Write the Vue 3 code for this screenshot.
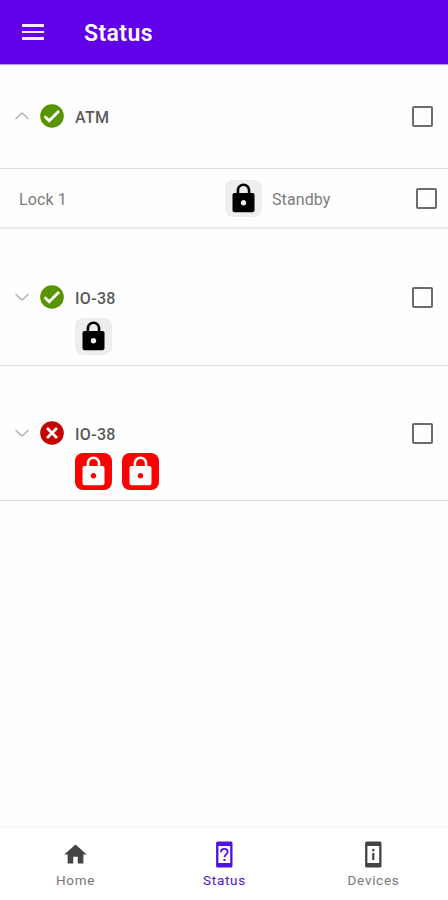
<script setup>
import { ref } from 'vue';

const LOCK_PATH =
  'M18.6 8H17V6c0-2.76-2.24-5-5-5S7 3.24 7 6v2H5.4C4.6 8 4 8.6 4 9.4v11.2c0 .8.6 1.4 1.4 1.4h13.2c.8 0 1.4-.6 1.4-1.4V9.4c0-.8-.6-1.4-1.4-1.4zM12 17c-1.1 0-2-.9-2-2s.9-2 2-2 2 .9 2 2-.9 2-2 2zm3.1-9H8.9V6c0-1.71 1.39-3.1 3.1-3.1 1.71 0 3.1 1.39 3.1 3.1v2z';

const groups = ref([
  {
    id: 1,
    name: 'ATM',
    ok: true,
    open: true,
    checked: false,
    locks: [{ id: 1, name: 'Lock 1', state: 'Standby', alarm: false, checked: false }],
  },
  {
    id: 2,
    name: 'IO-38',
    ok: true,
    open: false,
    checked: false,
    locks: [{ id: 1, name: 'Lock 1', state: 'Standby', alarm: false, checked: false }],
  },
  {
    id: 3,
    name: 'IO-38',
    ok: false,
    open: false,
    checked: false,
    locks: [
      { id: 1, name: 'Lock 1', state: 'Alarm', alarm: true, checked: false },
      { id: 2, name: 'Lock 2', state: 'Alarm', alarm: true, checked: false },
    ],
  },
]);

const activeTab = ref('Status');
const tabs = ['Home', 'Status', 'Devices'];

const toggleGroup = (group) => {
  group.open = !group.open;
};
</script>

<template>
  <div class="screen">
    <header class="app-bar">
      <button class="menu-button" aria-label="Menu">
        <span></span>
        <span></span>
        <span></span>
      </button>
      <h1>Status</h1>
    </header>

    <main class="content">
      <section v-for="group in groups" :key="group.id">
        <div class="group" :class="{ open: group.open }">
          <div class="group-head">
            <button class="chevron" @click="toggleGroup(group)">
              <svg width="16" height="10" viewBox="0 0 16 10">
                <path :d="group.open ? 'M1.5 8 L8 2 L14.5 8' : 'M1.5 2 L8 8 L14.5 2'" />
              </svg>
            </button>
            <svg class="badge" width="24" height="24" viewBox="0 0 24 24">
              <circle cx="12" cy="12" r="11.8" :fill="group.ok ? '#579400' : '#c40000'" />
              <path v-if="group.ok" d="M4.6 12.2l4.6 4.5 9.8-9.8" stroke-width="2.8" />
              <path v-else d="M7 7l10 10M17 7l-10 10" stroke-width="2.8" />
            </svg>
            <span class="group-name">{{ group.name }}</span>
            <button
              class="checkbox"
              :class="{ checked: group.checked }"
              @click="group.checked = !group.checked"
            ></button>
          </div>

          <!-- collapsed group: lock summary -->
          <div v-if="!group.open" class="lock-list">
            <span v-for="lock in group.locks" :key="lock.id" class="tile" :class="{ alarm: lock.alarm }">
              <svg width="33" height="33" viewBox="0 0 24 24"><path :d="LOCK_PATH" /></svg>
            </span>
          </div>
        </div>

        <!-- expanded group: one row per lock -->
        <template v-if="group.open">
          <div v-for="lock in group.locks" :key="lock.id" class="lock-row">
            <span class="lock-name">{{ lock.name }}</span>
            <span class="tile" :class="{ alarm: lock.alarm }">
              <svg width="33" height="33" viewBox="0 0 24 24"><path :d="LOCK_PATH" /></svg>
            </span>
            <span class="lock-state">{{ lock.state }}</span>
            <button
              class="checkbox"
              :class="{ checked: lock.checked }"
              @click="lock.checked = !lock.checked"
            ></button>
          </div>
        </template>
      </section>
    </main>

    <nav class="bottom-nav">
      <button
        v-for="tab in tabs"
        :key="tab"
        class="tab"
        :class="{ active: activeTab === tab }"
        @click="activeTab = tab"
      >
        <svg v-if="tab === 'Home'" width="27" height="27" viewBox="0 0 24 24">
          <path fill="currentColor" d="M10 20v-6h4v6h5v-8h3L12 3 2 12h3v8z" />
        </svg>
        <svg v-else width="27" height="27" viewBox="0 0 27 27">
          <path
            fill="currentColor"
            fill-rule="evenodd"
            d="M6.7 .5h13.2a1.6 1.6 0 0 1 1.6 1.6v22.8a1.6 1.6 0 0 1-1.6 1.6H6.7a1.6 1.6 0 0 1-1.6-1.6V2.1A1.6 1.6 0 0 1 6.7 .5zM7.4 5v17h11.8V5z"
          />
          <g v-if="tab === 'Status'">
            <path
              class="line"
              d="M9.9 11.2c0-2 1.4-3.4 3.4-3.4s3.4 1.3 3.4 3.1c0 2.4-3.2 2.6-3.2 5.3"
            />
            <rect x="12.5" y="18" width="2" height="2" fill="currentColor" />
          </g>
          <g v-else fill="currentColor">
            <rect x="12.2" y="8" width="2.2" height="2.3" />
            <rect x="12.2" y="12" width="2.2" height="7" />
          </g>
        </svg>
        <span>{{ tab }}</span>
      </button>
    </nav>
  </div>
</template>

<style>
body {
  margin: 0;
  background: #fff;
}
</style>

<style scoped>
.screen {
  display: flex;
  flex-direction: column;
  height: 100vh;
  background: #fefefe;
  font-family: Roboto, 'Liberation Sans', sans-serif;
}

button {
  padding: 0;
  border: none;
  background: none;
  font-family: inherit;
  cursor: pointer;
}

/* App bar */
.app-bar {
  display: flex;
  align-items: center;
  flex: none;
  box-sizing: border-box;
  height: 64px;
  padding: 3px 0 0 22px;
  background: #6200ea;
  box-shadow: 0 1px 1px rgba(98, 0, 234, 0.4);
}

.menu-button {
  display: flex;
  flex-direction: column;
  gap: 4px;
  width: 22px;
  margin-right: 40px;
  margin-bottom: 3px;
}

.menu-button span {
  height: 2.5px;
  background: #f3eaff;
}

h1 {
  margin: 0;
  color: #fff;
  font-size: 23px;
  font-weight: 600;
  letter-spacing: 0.4px;
}

.content {
  flex: 1;
}

/* Groups */
.group {
  box-sizing: border-box;
  height: 137px;
  padding: 48px 15px 0 14px;
  border-bottom: 1px solid #dedede;
}

.group.open {
  height: 105px;
  padding-top: 32px;
}

.group-head {
  display: flex;
  align-items: center;
  height: 40px;
}

section:last-child .group {
  height: 135px;
  padding-top: 47px;
}

.chevron {
  display: flex;
  width: 16px;
  margin-right: 10px;
}

.chevron path {
  fill: none;
  stroke: #b0b0b0;
  stroke-width: 1.4;
}

.badge path {
  fill: none;
  stroke: #fff;
}

.group-name {
  margin-left: 11px;
  padding-top: 2px;
  color: #5a5a5a;
  font-size: 16px;
  font-weight: 500;
  letter-spacing: 0.3px;
}

.checkbox {
  box-sizing: border-box;
  width: 21px;
  height: 21px;
  margin-left: auto;
  border: 2px solid #6c6c6c;
  border-radius: 2px;
}

.checkbox.checked {
  background: #6200ea;
}

/* Lock tiles */
.lock-list {
  display: flex;
  gap: 10px;
  padding: 1px 0 0 61px;
}

section:last-child .lock-list {
  padding-top: 0;
}

.tile {
  display: flex;
  align-items: center;
  justify-content: center;
  width: 37px;
  height: 37px;
  border-radius: 8px;
  background: #eee;
  fill: #000;
}

.tile.alarm {
  background: #fe0000;
  fill: #fff;
}

.lock-row {
  display: grid;
  grid-template-columns: 206px 37px 1fr 21px;
  align-items: center;
  box-sizing: border-box;
  height: 60px;
  padding: 0 11px 0 19px;
  border-bottom: 2px solid #e9e9e9;
  color: #7c7c7c;
  font-size: 16px;
  letter-spacing: 0.1px;
}

.lock-name,
.lock-state {
  padding-top: 2px;
}

.lock-state {
  margin-left: 10px;
}

/* Bottom navigation */
.bottom-nav {
  display: flex;
  flex: none;
  box-sizing: border-box;
  height: 72px;
  padding-left: 1px;
  background: #fff;
  box-shadow: 0 -1px 2px rgba(0, 0, 0, 0.04);
}

.tab {
  display: flex;
  flex: 1;
  flex-direction: column;
  align-items: center;
  padding-top: 13px;
  color: #444;
  font-size: 13.5px;
  letter-spacing: 0.7px;
}

.tab span {
  margin-top: 4px;
  color: #777;
  line-height: 16px;
}

.tab.active,
.tab.active span {
  color: #5010e0;
}

.line {
  fill: none;
  stroke: currentColor;
  stroke-width: 1.8;
}
</style>
